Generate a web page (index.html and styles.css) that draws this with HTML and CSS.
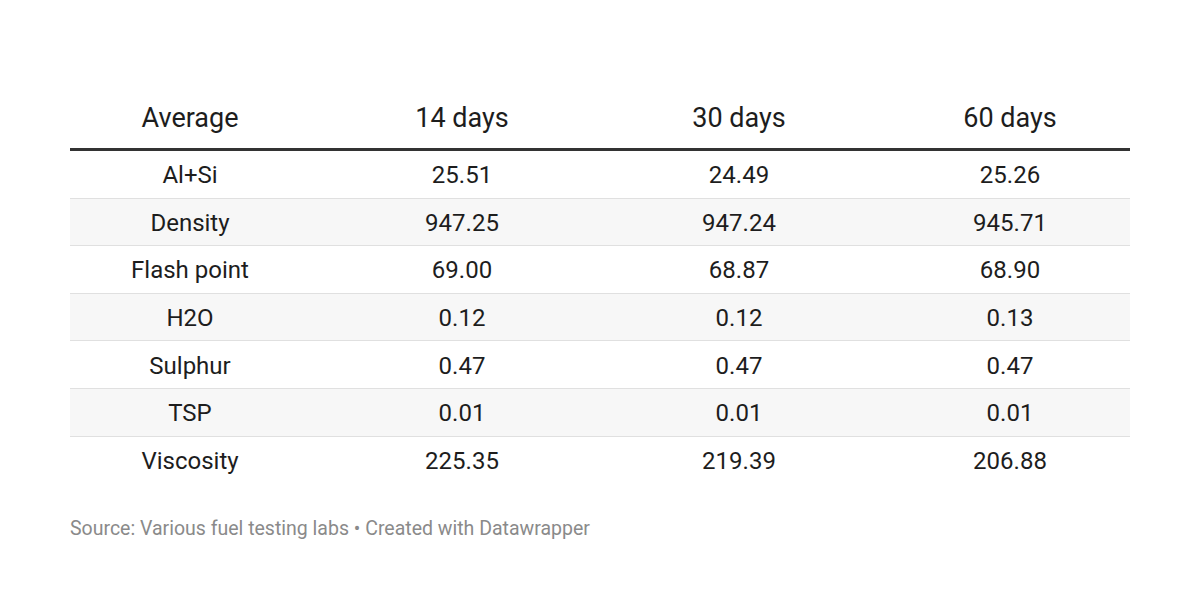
FILE: index.html
```html
<!DOCTYPE html>
<html>
<head>
<meta charset="utf-8">
<link rel="stylesheet" href="styles.css">
</head>
<body>
<div class="chart">
  <div class="table">
    <div class="row head">
      <div class="cell">Average</div>
      <div class="cell">14 days</div>
      <div class="cell">30 days</div>
      <div class="cell last">60 days</div>
    </div>
    <div class="row">
      <div class="cell">Al+Si</div><div class="cell">25.51</div><div class="cell">24.49</div><div class="cell last">25.26</div>
    </div>
    <div class="row stripe">
      <div class="cell">Density</div><div class="cell">947.25</div><div class="cell">947.24</div><div class="cell last">945.71</div>
    </div>
    <div class="row">
      <div class="cell">Flash point</div><div class="cell">69.00</div><div class="cell">68.87</div><div class="cell last">68.90</div>
    </div>
    <div class="row stripe">
      <div class="cell">H2O</div><div class="cell">0.12</div><div class="cell">0.12</div><div class="cell last">0.13</div>
    </div>
    <div class="row">
      <div class="cell">Sulphur</div><div class="cell">0.47</div><div class="cell">0.47</div><div class="cell last">0.47</div>
    </div>
    <div class="row stripe">
      <div class="cell">TSP</div><div class="cell">0.01</div><div class="cell">0.01</div><div class="cell last">0.01</div>
    </div>
    <div class="row final">
      <div class="cell">Viscosity</div><div class="cell">225.35</div><div class="cell">219.39</div><div class="cell last">206.88</div>
    </div>
  </div>
  <div class="footer">Source: Various fuel testing labs • Created with Datawrapper</div>
</div>
</body>
</html>
```

FILE: styles.css
```css
html, body {
  margin: 0;
  padding: 0;
  background: #ffffff;
}
body {
  font-family: Roboto, "Liberation Sans", sans-serif;
  color: #1d1d1d;
}
.chart {
  padding: 88px 70px 0 70px;
  width: 1060px;
}
.table {
  display: flex;
  flex-direction: column;
}
.row {
  display: grid;
  grid-template-columns: 240px 304px 250px 266px;
  height: 47.6px;
  box-sizing: border-box;
  border-bottom: 1px solid #e0e0e0;
  font-size: 24px;
}
.row .cell {
  padding-top: 2px;
}
.row.head {
  height: 63px;
  font-size: 27px;
  border-bottom: 3px solid #333333;
}
.row.head .cell {
  padding-top: 0;
  padding-bottom: 0;
}
.row.stripe {
  background: #f7f7f7;
}
.row.final {
  border-bottom: none;
}
.cell {
  display: flex;
  align-items: center;
  justify-content: center;
}
.row .cell.last {
  padding-left: 26px;
}
.footer {
  margin-top: 33px;
  font-size: 19.5px;
  color: #8a8a8a;
  line-height: 24px;
}
```
